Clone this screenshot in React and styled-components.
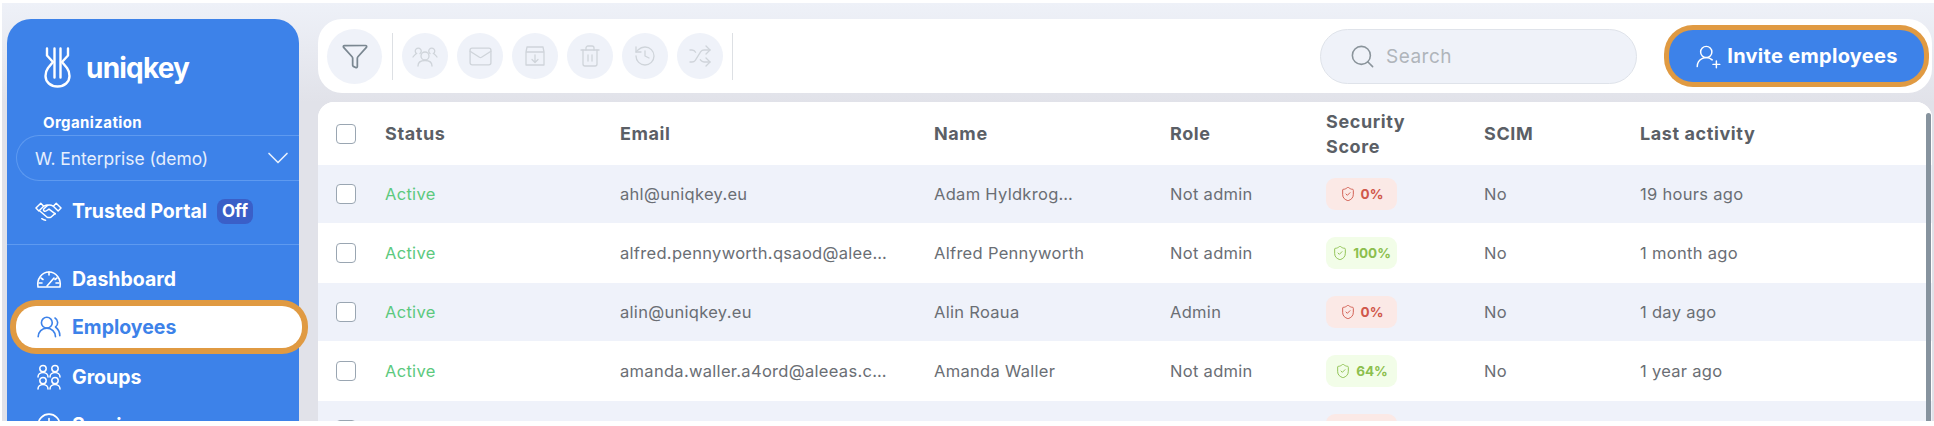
import React from 'react'
import styled, { createGlobalStyle } from 'styled-components'
import { Funnel, Mail, Trash2, History, Shuffle, Search, ChevronDown, UsersRound, ShieldCheck, UserRoundPlus, Clock } from 'lucide-react'

const Global = createGlobalStyle`
  html, body { margin: 0; padding: 0; background: #fff; }
  body { font-family: "Inter", "Liberation Sans", sans-serif; overflow: hidden; }
`

const Page = styled.div`
  height: 418px;
  margin: 3px 0 0 2px;
  padding: 16px 2px 0 5px;
  box-sizing: border-box;
  display: flex;
  gap: 19px;
  overflow: hidden;
  background: linear-gradient(180deg, #eef1f8 0, #e1e2e9 100px);
`

const Sidebar = styled.aside`
  width: 292px;
  height: 440px;
  flex: none;
  background: #3d82e9;
  border-radius: 24px;
  color: #fff;
  box-sizing: border-box;
  padding: 28px 0 0 9px;
`

const Brand = styled.div`
  display: flex;
  align-items: center;
  gap: 15px;
  padding-left: 28px;
  height: 41px;
  font-size: 28px;
  font-weight: 700;
  letter-spacing: -0.8px;
`

const OrgLabel = styled.div`
  font-size: 15px;
  font-weight: 700;
  letter-spacing: 0.4px;
  margin: 27px 0 0 27px;
  line-height: 16px;
`

const OrgSelect = styled.div`
  height: 46px;
  margin-top: 4px;
  padding: 0 3px 0 18px;
  box-sizing: border-box;
  display: flex;
  align-items: center;
  justify-content: space-between;
  border: 1px solid #5e9af0;
  border-right: 0;
  border-radius: 23px 0 0 23px;
  font-size: 17.4px;
  color: #e6effd;
`

const Trusted = styled.div`
  display: flex;
  align-items: center;
  gap: 10px;
  height: 44px;
  margin-top: 8px;
  padding-left: 19px;
  font-size: 19.5px;
  font-weight: 700;
`

const OffBadge = styled.span`
  padding: 1px 5px;
  border-radius: 8px;
  background: #3a5fc8;
  font-size: 17px;
  line-height: 23px;
`

const Divider = styled.div`
  height: 1px;
  background: #5e9af0;
  margin: 11px 0 0 -9px;
`

const Nav = styled.nav`
  margin-top: 10px;
  display: flex;
  flex-direction: column;
`

const NavItem = styled.div`
  display: flex;
  align-items: center;
  gap: 10px;
  height: ${p => (p.$active ? '42px' : '48px')};
  margin: ${p => (p.$active ? '3px -3px 5px 0' : '0')};
  padding-left: 20px;
  font-size: 19.5px;
  font-weight: 700;
  ${p => p.$active && `
    background: #fff;
    color: #3d82e9;
    border-radius: 20px;
    box-shadow: 0 0 0 6px #e09a42;
  `}
`

const Main = styled.main`
  flex: 1;
  min-width: 0;
  display: flex;
  flex-direction: column;
  gap: 9px;
`

const Toolbar = styled.div`
  height: 74px;
  flex: none;
  background: #fff;
  border-radius: 24px;
  display: flex;
  align-items: center;
  padding: 0 0 0 9px;
`

const RoundButton = styled.button`
  width: ${p => (p.$large ? '55px' : '46px')};
  height: ${p => (p.$large ? '55px' : '46px')};
  flex: none;
  border: 0;
  padding: 0;
  border-radius: 50%;
  background: #eff2f9;
  color: ${p => (p.$large ? '#7a8791' : '#cfd4da')};
  display: flex;
  align-items: center;
  justify-content: center;
`

const IconGroup = styled.div`
  display: flex;
  gap: 9px;
  padding: 0 9px;
  margin-left: 10px;
  height: 47px;
  align-items: center;
  border-left: 1px solid #dde0e4;
  border-right: 1px solid #dde0e4;
`

const SearchBox = styled.div`
  width: 317px;
  height: 55px;
  margin-left: auto;
  box-sizing: border-box;
  border: 1px solid #dfe3ea;
  border-radius: 28px;
  background: #eff2f9;
  display: flex;
  align-items: center;
  gap: 10px;
  padding-left: 28px;
  font-size: 19px;
  color: #b0b5bb;
  letter-spacing: 0.5px;
`

const InviteButton = styled.button`
  width: 255px;
  height: 52px;
  margin: 0 8px 0 32px;
  padding: 0;
  border: 0;
  border-radius: 24px;
  background: #3d82e9;
  box-shadow: 0 0 0 5px #e09a42;
  color: #fff;
  font: 700 20px "Inter", sans-serif;
  letter-spacing: 0.3px;
  display: flex;
  align-items: center;
  justify-content: center;
  gap: 5px;
  white-space: nowrap;
`

const TableCard = styled.section`
  position: relative;
  flex: none;
  background: #fff;
  border-radius: 16px 16px 0 0;
  overflow: hidden;
`

const Grid = styled.div`
  display: grid;
  grid-template-columns: 49px 235px 314px 236px 156px 158px 156px 1fr;
  align-items: center;
  padding-left: 18px;
  background: ${p => (p.$odd ? '#eff2fa' : '#fff')};
  height: ${p => p.$h}px;
`

const HeadCell = styled.div`
  font-size: 18px;
  font-weight: 700;
  letter-spacing: 0.6px;
  line-height: 25px;
  color: #5b5f66;
`

const Cell = styled.div`
  font-size: 16.5px;
  letter-spacing: 0.3px;
  color: ${p => (p.$green ? '#5cc97e' : '#6a6e74')};
  white-space: nowrap;
`

const Check = styled.span`
  display: block;
  width: 20px;
  height: 20px;
  box-sizing: border-box;
  border: 1.5px solid #9aa6b2;
  border-radius: 4px;
  background: #fff;
`

const Score = styled.span`
  width: 71px;
  height: 32px;
  border-radius: 9px;
  background: ${p => (p.$good ? '#f2fde8' : '#fbe9e6')};
  color: ${p => (p.$good ? '#8cbf4e' : '#d0574a')};
  font-size: 13.5px;
  font-weight: 700;
  letter-spacing: 0;
  display: flex;
  align-items: center;
  justify-content: center;
  gap: 5px;
`

const Scrollbar = styled.div`
  position: absolute;
  top: 11px;
  right: 1px;
  width: 5px;
  bottom: 0;
  border-radius: 3px 3px 0 0;
  background: #86939e;
`

const Logo = () => (
  <svg width="27" height="41" viewBox="0 0 27 41" fill="none" stroke="#fff" strokeWidth="2.4" strokeLinecap="round" strokeLinejoin="round">
    <path d="M3 1.500v7l6 6.500-5 6c-1.500 2-2.500 5-2.500 8 0 6 5 10.500 12 10.500s12-4.500 12-10.500c0-3-1-6-2.500-8l-5-6 6-6.500v-7" />
    <path d="M10.500 1.500v29M16.500 1.500v29" />
  </svg>
)

const HandshakeIcon = () => (
  <svg width="27" height="22" viewBox="0 0 28 22" fill="none" stroke="currentColor" strokeWidth="1.5" strokeLinecap="round" strokeLinejoin="round">
    <path d="M1 8l5-5 3 3-5 5zM27 8l-5-5-3 3 5 5z" />
    <path d="M9 6c2-1 3.500-2 5-1M19 6c-2-1-5-2-7 0l-3 3c-1 1.500 1 3 2.500 2l3-2 6.500 5" />
    <path d="M5 11l7 6c1.500 1 3.500 1 5 0l4-3.500M7 19c1.500 1 3 1.500 4 1.500" />
  </svg>
)

const Dash = () => (
  <svg width="26" height="26" viewBox="0 0 26 26" fill="none" stroke="currentColor" strokeWidth="1.6" strokeLinecap="round" strokeLinejoin="round">
    <path d="M2 21c-1.500-8 4-15 11-15s12.500 7 11 15z" />
    <path d="M13 6v3M5 12l2 1.500M21 12l-2 1.500M3 17h3M20 17h3M11 20l7-8" />
  </svg>
)

const Person = ({ x, y }) => (
  <g transform={`translate(${x} ${y})`}>
    <circle cx="5" cy="3.600" r="3.200" />
    <path d="M0 12c0-2.500 2-4.500 5-4.500s5 2 5 4.500" />
  </g>
)

const GroupsIcon = () => (
  <svg width="26" height="26" viewBox="0 0 24 26" fill="none" stroke="currentColor" strokeWidth="1.5" strokeLinecap="round">
    <Person x="1" y="1" />
    <Person x="13" y="1" />
    <Person x="1" y="13" />
    <Person x="13" y="13" />
  </svg>
)

const TeamIcon = () => (
  <svg width="26" height="24" viewBox="0 0 26 24" fill="none" stroke="currentColor" strokeWidth="1.300" strokeLinecap="round">
    <circle cx="13" cy="12" r="4" />
    <path d="M6 22c0-3.500 3-5.500 7-5.500s7 2 7 5.500" />
    <path d="M8 9.500a3 3 0 1 0-3.500 0C3 10.500 2 11.500 1 13M18 9.500a3 3 0 1 1 3.500 0c1.500 1 2.500 2 3.500 3.500" />
  </svg>
)

const ImportIcon = () => (
  <svg width="24" height="24" viewBox="0 0 24 24" fill="none" stroke="currentColor" strokeWidth="1.300" strokeLinecap="round" strokeLinejoin="round">
    <path d="M4 3h16l1 5v13H3V8zM3 8h18" />
    <path d="M12 11v7M9 15.500l3 3 3-3" />
  </svg>
)

const rows = [
  { email: 'ahl@uniqkey.eu', name: 'Adam Hyldkrog…', role: 'Not admin', score: '0%', time: '19 hours ago' },
  { email: 'alfred.pennyworth.qsaod@alee…', name: 'Alfred Pennyworth', role: 'Not admin', score: '100%', good: true, time: '1 month ago' },
  { email: 'alin@uniqkey.eu', name: 'Alin Roaua', role: 'Admin', score: '0%', time: '1 day ago' },
  { email: 'amanda.waller.a4ord@aleeas.c…', name: 'Amanda Waller', role: 'Not admin', score: '64%', good: true, time: '1 year ago' },
]

const heights = [58, 60, 58, 60]

export default function App() {
  return (
    <Page>
      <Global />
      <Sidebar>
        <Brand><Logo />uniqkey</Brand>
        <OrgLabel>Organization</OrgLabel>
        <OrgSelect>
          W. Enterprise (demo)
          <ChevronDown size={36} strokeWidth={1.1} />
        </OrgSelect>
        <Trusted>
          <HandshakeIcon />
          Trusted Portal
          <OffBadge>Off</OffBadge>
        </Trusted>
        <Divider />
        <Nav>
          <NavItem><Dash />Dashboard</NavItem>
          <NavItem $active><UsersRound size={26} strokeWidth={1.5} />Employees</NavItem>
          <NavItem><GroupsIcon />Groups</NavItem>
          <NavItem><Clock size={26} strokeWidth={1.5} />Services</NavItem>
        </Nav>
      </Sidebar>
      <Main>
        <Toolbar>
          <RoundButton $large><Funnel size={28} strokeWidth={1.5} /></RoundButton>
          <IconGroup>
            <RoundButton><TeamIcon /></RoundButton>
            <RoundButton><Mail size={25} strokeWidth={1.3} /></RoundButton>
            <RoundButton><ImportIcon /></RoundButton>
            <RoundButton><Trash2 size={24} strokeWidth={1.3} /></RoundButton>
            <RoundButton><History size={24} strokeWidth={1.3} /></RoundButton>
            <RoundButton><Shuffle size={24} strokeWidth={1.3} /></RoundButton>
          </IconGroup>
          <SearchBox><Search size={27} strokeWidth={1.4} color="#8a949b" />Search</SearchBox>
          <InviteButton><UserRoundPlus size={27} strokeWidth={1.3} />Invite employees</InviteButton>
        </Toolbar>
        <TableCard>
          <Scrollbar />
          <Grid $h={63}>
            <Check />
            <HeadCell>Status</HeadCell>
            <HeadCell>Email</HeadCell>
            <HeadCell>Name</HeadCell>
            <HeadCell>Role</HeadCell>
            <HeadCell>Security<br />Score</HeadCell>
            <HeadCell>SCIM</HeadCell>
            <HeadCell>Last activity</HeadCell>
          </Grid>
          {rows.map((r, i) => (
            <Grid key={r.email} $odd={i % 2 === 0} $h={heights[i]}>
              <Check />
              <Cell $green>Active</Cell>
              <Cell>{r.email}</Cell>
              <Cell>{r.name}</Cell>
              <Cell>{r.role}</Cell>
              <Cell><Score $good={r.good}><ShieldCheck size={16} strokeWidth={1.4} />{r.score}</Score></Cell>
              <Cell>No</Cell>
              <Cell>{r.time}</Cell>
            </Grid>
          ))}
          <Grid $odd $h={58}>
            <Check />
            <Cell />
            <Cell />
            <Cell />
            <Cell />
            <Cell><Score /></Cell>
          </Grid>
        </TableCard>
      </Main>
    </Page>
  )
}
